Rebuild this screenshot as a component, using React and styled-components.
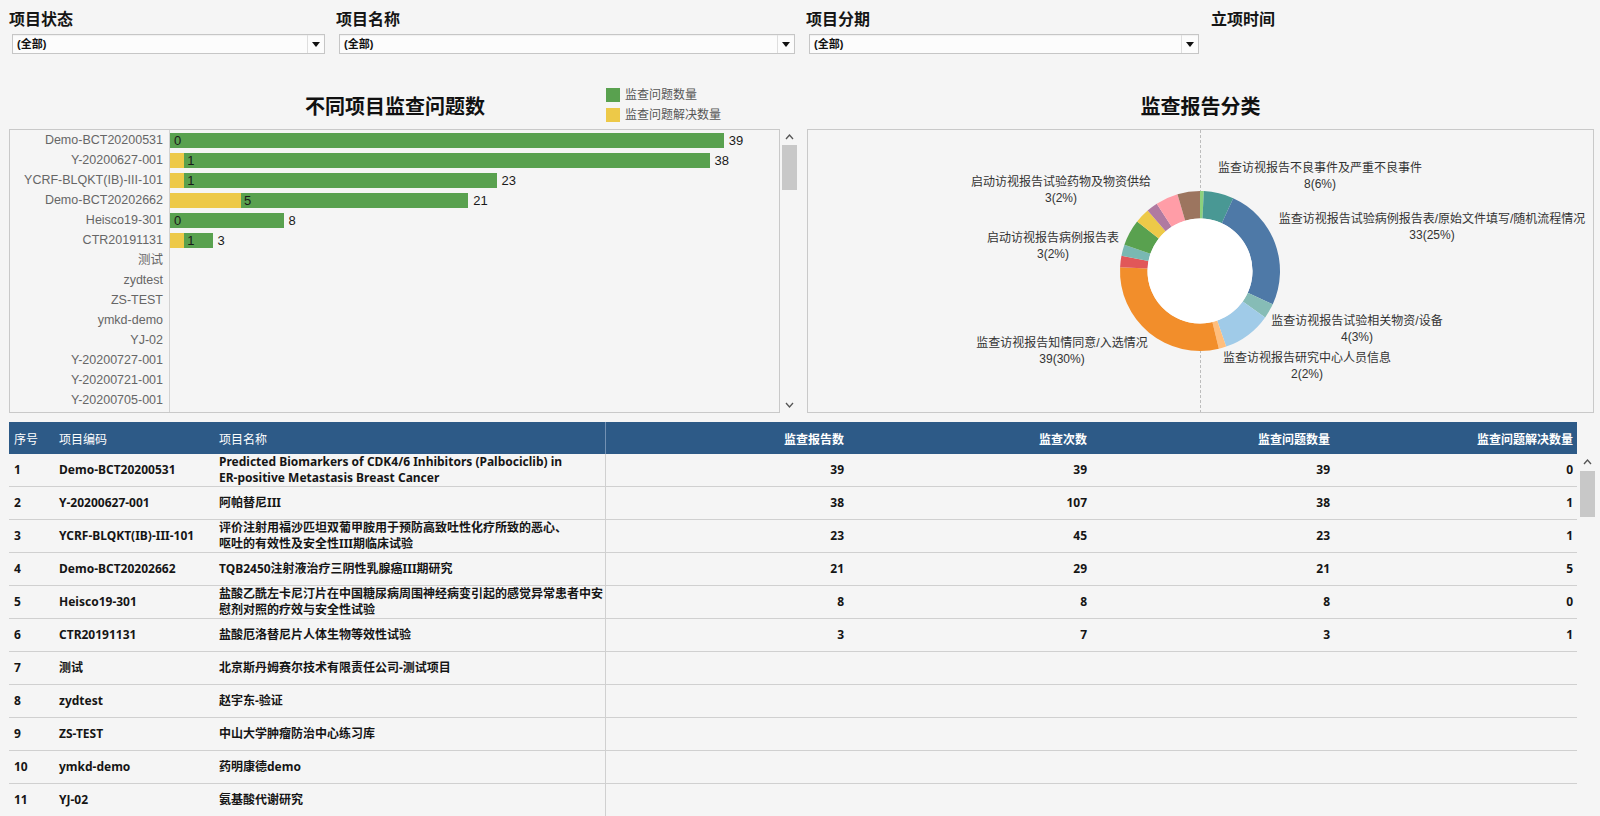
import React from "react";
import styled, { createGlobalStyle } from "styled-components";

const FONT = `"Liberation Sans", "Noto Sans CJK SC", sans-serif`;
const TABLE_FONT = `"Noto Sans", "Noto Sans CJK SC", sans-serif`;

const GlobalStyle = createGlobalStyle`
  html, body { margin: 0; padding: 0; background: #f5f5f5; overflow: hidden; }
  body { font-family: ${FONT}; color: #111; }
  * { box-sizing: border-box; }
`;

const Page = styled.div`
  width: 1600px;
  height: 816px;
  overflow: hidden;
  background: #f5f5f5;
  display: flex;
  flex-direction: column;
`;

/* ---------- Filters ---------- */
const FilterBar = styled.div`
  display: flex;
  padding: 10px 0 0 9px;
  height: 54px;
`;
const FilterGroup = styled.div`
  width: ${(p) => (p.$w ? `${p.$w}px` : "auto")};
  flex: ${(p) => (p.$w ? "none" : "1")};
  display: flex;
  flex-direction: column;
`;
const FilterLabel = styled.div`
  font-size: 16px;
  font-weight: 700;
  line-height: 20px;
  height: 20px;
  color: #151515;
`;
const Select = styled.div`
  margin: 4px 0 0 3px;
  width: ${(p) => p.$w}px;
  height: 20px;
  display: flex;
  border: 1px solid #c6c6c6;
  background: #fcfcfc;
  box-shadow: inset 0 1px 1px rgba(0, 0, 0, 0.05);
`;
const SelectValue = styled.div`
  flex: 1;
  font-size: 11px;
  font-weight: 700;
  line-height: 18px;
  padding-left: 4px;
  color: #111;
`;
const SelectArrow = styled.div`
  width: 17px;
  border-left: 1px solid #dedede;
  display: flex;
  align-items: center;
  justify-content: center;
`;

/* ---------- Charts ---------- */
const ChartsRow = styled.div`
  display: flex;
  gap: 10px;
  padding-left: 9px;
`;
const Panel = styled.div`
  width: ${(p) => p.$w}px;
  display: flex;
  flex-direction: column;
`;
const TitleRow = styled.div`
  width: ${(p) => p.$w}px;
  height: 75px;
  display: grid;
  grid-template-columns: 1fr 1fr;
  align-items: start;
`;
const ChartTitle = styled.div`
  grid-column: 1 / -1;
  grid-row: 1;
  margin-top: 42px;
  text-align: center;
  font-size: 20px;
  font-weight: 700;
  line-height: 22px;
  color: #111;
`;
const Legend = styled.div`
  grid-column: 2;
  grid-row: 1;
  margin: 34px 0 0 211px;
  display: flex;
  flex-direction: column;
  gap: 6px;
`;
const LegendItem = styled.div`
  display: flex;
  align-items: center;
  gap: 5px;
  height: 14px;
  font-size: 12px;
  line-height: 14px;
  color: #555;
  white-space: nowrap;
`;
const Swatch = styled.span`
  width: 14px;
  height: 14px;
  background: ${(p) => p.$c};
`;

const ChartFrame = styled.div`
  display: flex;
  height: 284px;
`;
const ChartBox = styled.div`
  width: ${(p) => p.$w}px;
  height: 284px;
  border: 1px solid #c9c9c9;
  display: flex;
  flex-direction: column;
  overflow: hidden;
`;
const BarRow = styled.div`
  display: flex;
  height: 20px;
  flex: none;
`;
const BarLabel = styled.div`
  width: 160px;
  flex: none;
  text-align: right;
  padding-right: 6px;
  border-right: 1px solid #d2d2d2;
  font-size: 12.5px;
  line-height: 20px;
  color: #666;
  white-space: nowrap;
`;
const BarTrack = styled.div`
  flex: 1;
  display: flex;
  align-items: center;
`;
const SolvedSeg = styled.div`
  height: 15px;
  background: #edc948;
  flex: none;
`;
const TotalSeg = styled.div`
  height: 15px;
  background: #59a14f;
  flex: none;
  padding-left: ${(p) => (p.$after ? 3 : 4)}px;
  font-size: 13px;
  line-height: 15px;
  color: #1a1a1a;
  white-space: nowrap;
`;
const TotalLabel = styled.div`
  margin-left: 5px;
  font-size: 13px;
  line-height: 15px;
  color: #1a1a1a;
`;
const AxisFill = styled.div`
  flex: 1;
  width: 160px;
  border-right: 1px solid #d2d2d2;
`;

const VScroll = styled.div`
  width: 16px;
  margin-left: ${(p) => p.$ml}px;
  display: flex;
  flex-direction: column;
  align-items: center;
`;
const ScrollArrow = styled.div`
  height: 16px;
  width: 16px;
  display: flex;
  align-items: center;
  justify-content: center;
`;
const ScrollThumb = styled.div`
  width: 15px;
  height: ${(p) => p.$h}px;
  margin-top: ${(p) => p.$top}px;
  background: #c8c8c8;
`;
const ScrollSpacer = styled.div`
  flex: 1;
`;

const PieSvg = styled.svg`
  display: block;
  font-family: ${FONT};
`;

/* ---------- Table ---------- */
const COLS = "45px 160px 391px repeat(4, 243px)";
const TableArea = styled.div`
  margin-top: 9px;
  padding-left: 9px;
  display: flex;
  flex-direction: column;
`;
const TableHead = styled.div`
  display: grid;
  grid-template-columns: ${COLS};
  width: 1568px;
  height: 32px;
  background: #2d5a87;
`;
const HeadCell = styled.div`
  display: flex;
  align-items: center;
  justify-content: ${(p) => (p.$num ? "flex-end" : "flex-start")};
  padding: ${(p) => (p.$num ? "0 4px 0 0" : "0 0 0 5px")};
  font-size: 12px;
  font-weight: ${(p) => (p.$num ? 700 : 400)};
  color: #fff;
  white-space: nowrap;
  border-left: ${(p) => (p.$divider ? "1px solid #7391b3" : "none")};
`;
const BodyWrap = styled.div`
  display: flex;
`;
const TableBody = styled.div`
  width: 1568px;
  display: flex;
  flex-direction: column;
`;
const Row = styled.div`
  display: grid;
  grid-template-columns: ${COLS};
  height: 33px;
  flex: none;
  border-bottom: 1px solid #d0d0d0;
`;
const Cell = styled.div`
  display: flex;
  align-items: center;
  justify-content: ${(p) => (p.$num ? "flex-end" : "flex-start")};
  padding: ${(p) => (p.$num ? "0 4px 0 0" : "0 0 0 5px")};
  font-family: ${TABLE_FONT};
  font-size: 12px;
  font-weight: 700;
  line-height: 16px;
  color: #151515;
  white-space: pre;
  border-left: ${(p) => (p.$divider ? "1px solid #d0d0d0" : "none")};
`;

/* ---------- Icons ---------- */
const Caret = () => (
  <svg width="8" height="5" viewBox="0 0 8 5">
    <path d="M0 0 L8 0 L4 5 Z" fill="#111" />
  </svg>
);
const Chevron = ({ down }) => (
  <svg width="9" height="6" viewBox="0 0 9 6">
    <polyline
      points={down ? "1,1 4.5,5 8,1" : "1,5 4.5,1 8,5"}
      fill="none"
      stroke="#555"
      strokeWidth="1.3"
    />
  </svg>
);

/* ---------- Data ---------- */
const FILTERS = [
  { label: "项目状态", w: 327, sw: 313 },
  { label: "项目名称", w: 470, sw: 456 },
  { label: "项目分期", w: 405, sw: 390 },
  { label: "立项时间" },
];

const BARS = [
  ["Demo-BCT20200531", 39, 0],
  ["Y-20200627-001", 38, 1],
  ["YCRF-BLQKT(IB)-III-101", 23, 1],
  ["Demo-BCT20202662", 21, 5],
  ["Heisco19-301", 8, 0],
  ["CTR20191131", 3, 1],
  ["测试"],
  ["zydtest"],
  ["ZS-TEST"],
  ["ymkd-demo"],
  ["YJ-02"],
  ["Y-20200727-001"],
  ["Y-20200721-001"],
  ["Y-20200705-001"],
];
const UNIT = 14.2;

const PIE = [
  { v: 1, c: "#8cd17d" },
  { v: 8, c: "#499894" },
  { v: 33, c: "#4e79a7" },
  { v: 4, c: "#86bcb6" },
  { v: 13, c: "#a0cbe8" },
  { v: 2, c: "#ffbe7d" },
  { v: 39, c: "#f28e2b" },
  { v: 3, c: "#e15759" },
  { v: 3, c: "#79b8b2" },
  { v: 7, c: "#59a14f" },
  { v: 4, c: "#edc948" },
  { v: 3, c: "#b07aa1" },
  { v: 6, c: "#ff9da7" },
  { v: 6, c: "#9c755f" },
];

const PIE_LABELS = [
  { x: 512, y: 38, t: "监查访视报告不良事件及严重不良事件", n: "8(6%)" },
  { x: 624, y: 89, t: "监查访视报告试验病例报告表/原始文件填写/随机流程情况", n: "33(25%)" },
  { x: 549, y: 191, t: "监查访视报告试验相关物资/设备", n: "4(3%)" },
  { x: 499, y: 228, t: "监查访视报告研究中心人员信息", n: "2(2%)" },
  { x: 254, y: 213, t: "监查访视报告知情同意/入选情况", n: "39(30%)" },
  { x: 245, y: 108, t: "启动访视报告病例报告表", n: "3(2%)" },
  { x: 253, y: 52, t: "启动访视报告试验药物及物资供给", n: "3(2%)" },
];

const ROWS = [
  [1, "Demo-BCT20200531", "Predicted Biomarkers of CDK4/6 Inhibitors (Palbociclib) in\nER-positive Metastasis Breast Cancer", 39, 39, 39, 0],
  [2, "Y-20200627-001", "阿帕替尼III", 38, 107, 38, 1],
  [3, "YCRF-BLQKT(IB)-III-101", "评价注射用福沙匹坦双葡甲胺用于预防高致吐性化疗所致的恶心、\n呕吐的有效性及安全性III期临床试验", 23, 45, 23, 1],
  [4, "Demo-BCT20202662", "TQB2450注射液治疗三阴性乳腺癌III期研究", 21, 29, 21, 5],
  [5, "Heisco19-301", "盐酸乙酰左卡尼汀片在中国糖尿病周围神经病变引起的感觉异常患者中安\n慰剂对照的疗效与安全性试验", 8, 8, 8, 0],
  [6, "CTR20191131", "盐酸厄洛替尼片人体生物等效性试验", 3, 7, 3, 1],
  [7, "测试", "北京斯丹姆赛尔技术有限责任公司-测试项目"],
  [8, "zydtest", "赵宇东-验证"],
  [9, "ZS-TEST", "中山大学肿瘤防治中心练习库"],
  [10, "ymkd-demo", "药明康德demo"],
  [11, "YJ-02", "氨基酸代谢研究"],
];

/* ---------- Pieces ---------- */
function arcPath(cx, cy, R, r, a0, a1) {
  const rad = (a) => (a * Math.PI) / 180;
  const pt = (rr, a) => [cx + rr * Math.sin(rad(a)), cy - rr * Math.cos(rad(a))];
  const large = a1 - a0 > 180 ? 1 : 0;
  const [x0, y0] = pt(R, a0);
  const [x1, y1] = pt(R, a1);
  const [x2, y2] = pt(r, a1);
  const [x3, y3] = pt(r, a0);
  return `M${x0},${y0} A${R},${R} 0 ${large} 1 ${x1},${y1} L${x2},${y2} A${r},${r} 0 ${large} 0 ${x3},${y3} Z`;
}

function Donut() {
  const W = 785;
  const H = 282;
  const cx = 392;
  const cy = 141;
  const total = PIE.reduce((s, d) => s + d.v, 0);
  let acc = 0;
  return (
    <PieSvg width={W} height={H} viewBox={`0 0 ${W} ${H}`}>
      <line x1={cx + 0.5} y1="0" x2={cx + 0.5} y2={H} stroke="#bdbdbd" strokeDasharray="3 2" />
      {PIE.map((d, i) => {
        const a0 = (acc / total) * 360;
        acc += d.v;
        const a1 = (acc / total) * 360;
        return <path key={i} d={arcPath(cx, cy, 80, 52.5, a0, a1)} fill={d.c} />;
      })}
      <circle cx={cx} cy={cy} r="52.5" fill="#fff" />
      {PIE_LABELS.map((l, i) => (
        <g key={i} fontSize="12" fill="#333" textAnchor="middle">
          <text x={l.x} y={l.y} dominantBaseline="central">{l.t}</text>
          <text x={l.x} y={l.y + 16} dominantBaseline="central">{l.n}</text>
        </g>
      ))}
    </PieSvg>
  );
}

function Scrollbar({ thumbTop, thumbH, ml, down = true }) {
  return (
    <VScroll $ml={ml}>
      <ScrollArrow>
        <Chevron />
      </ScrollArrow>
      <ScrollThumb $top={thumbTop} $h={thumbH} />
      <ScrollSpacer />
      {down && (
        <ScrollArrow>
          <Chevron down />
        </ScrollArrow>
      )}
    </VScroll>
  );
}

export default function App() {
  return (
    <Page>
      <GlobalStyle />
      <FilterBar>
        {FILTERS.map((f) => (
          <FilterGroup key={f.label} $w={f.w}>
            <FilterLabel>{f.label}</FilterLabel>
            {f.sw && (
              <Select $w={f.sw}>
                <SelectValue>(全部)</SelectValue>
                <SelectArrow>
                  <Caret />
                </SelectArrow>
              </Select>
            )}
          </FilterGroup>
        ))}
      </FilterBar>

      <ChartsRow>
        <Panel $w={788}>
          <TitleRow $w={772}>
            <ChartTitle>不同项目监查问题数</ChartTitle>
            <Legend>
              <LegendItem>
                <Swatch $c="#59a14f" />
                监查问题数量
              </LegendItem>
              <LegendItem>
                <Swatch $c="#edc948" />
                监查问题解决数量
              </LegendItem>
            </Legend>
          </TitleRow>
          <ChartFrame>
            <ChartBox $w={772}>
              {BARS.map(([name, total, solved]) => (
                <BarRow key={name}>
                  <BarLabel>{name}</BarLabel>
                  <BarTrack>
                    {total !== undefined && (
                      <>
                        {solved > 0 && <SolvedSeg style={{ width: solved * UNIT }} />}
                        <TotalSeg $after={solved > 0} style={{ width: (total - solved) * UNIT }}>
                          {solved}
                        </TotalSeg>
                        <TotalLabel>{total}</TotalLabel>
                      </>
                    )}
                  </BarTrack>
                </BarRow>
              ))}
              <AxisFill />
            </ChartBox>
            <Scrollbar ml={1} thumbTop={0} thumbH={45} />
          </ChartFrame>
        </Panel>

        <Panel $w={787}>
          <TitleRow $w={787}>
            <ChartTitle>监查报告分类</ChartTitle>
          </TitleRow>
          <ChartBox $w={787}>
            <Donut />
          </ChartBox>
        </Panel>
      </ChartsRow>

      <TableArea>
        <TableHead>
          <HeadCell>序号</HeadCell>
          <HeadCell>项目编码</HeadCell>
          <HeadCell>项目名称</HeadCell>
          <HeadCell $num $divider>监查报告数</HeadCell>
          <HeadCell $num>监查次数</HeadCell>
          <HeadCell $num>监查问题数量</HeadCell>
          <HeadCell $num>监查问题解决数量</HeadCell>
        </TableHead>
        <BodyWrap>
          <TableBody>
            {ROWS.map((r) => (
              <Row key={r[0]}>
                <Cell>{r[0]}</Cell>
                <Cell>{r[1]}</Cell>
                <Cell>{r[2]}</Cell>
                <Cell $num $divider>{r[3]}</Cell>
                <Cell $num>{r[4]}</Cell>
                <Cell $num>{r[5]}</Cell>
                <Cell $num>{r[6]}</Cell>
              </Row>
            ))}
          </TableBody>
          <Scrollbar ml={2} thumbTop={1} thumbH={46} down={false} />
        </BodyWrap>
      </TableArea>
    </Page>
  );
}
